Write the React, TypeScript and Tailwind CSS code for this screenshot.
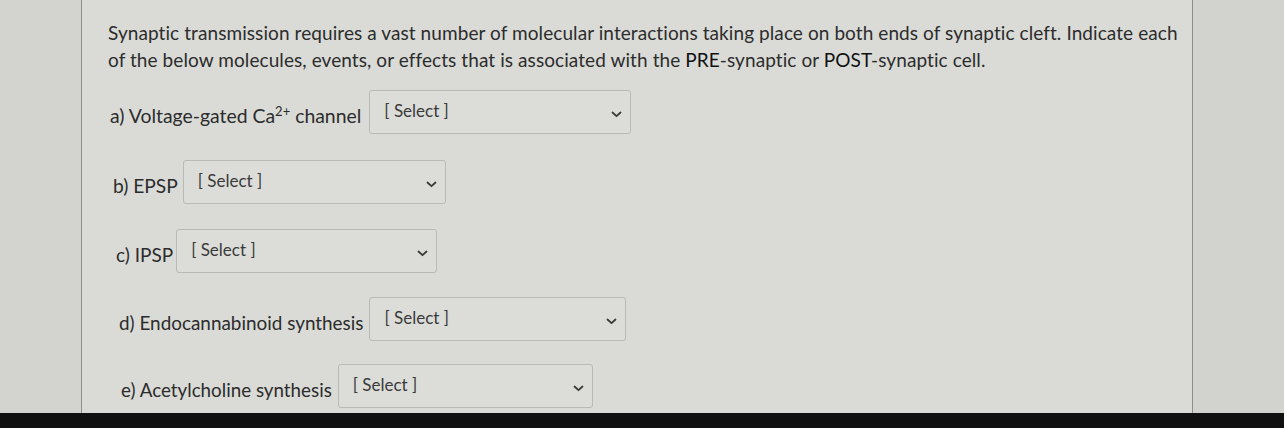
import React from 'react';

const items = [
  { key: 'a', label: <>a) Voltage-gated Ca<sup className="text-[13px]">2+</sup> channel</>, pl: 'pl-[2px]', mt: 'mt-[17px]', w: 'w-[262px]', gap: 'gap-[8px]', fs: 'text-[19.4px]' },
  { key: 'b', label: <>b) EPSP</>, pl: 'pl-[5px]', mt: 'mt-[26px]', w: 'w-[263px]', gap: 'gap-[5px]', fs: 'text-[19.2px]' },
  { key: 'c', label: <>c) IPSP</>, pl: 'pl-[8px]', mt: 'mt-[25px]', w: 'w-[261px]', gap: 'gap-[3px]', fs: 'text-[19px]' },
  { key: 'd', label: <>d) Endocannabinoid synthesis</>, pl: 'pl-[11px]', mt: 'mt-[24px]', w: 'w-[257px]', gap: 'gap-[6px]', fs: 'text-[18.9px]' },
  { key: 'e', label: <>e) Acetylcholine synthesis</>, pl: 'pl-[13px]', mt: 'mt-[23px]', w: 'w-[255px]', gap: 'gap-[6px]', fs: 'text-[18.8px]' },
];

const Chevron = () => (
  <svg width="11" height="7" viewBox="0 0 11 7" fill="none">
    <path d="M1.5 1.5 L5.5 5.2 L9.5 1.5" stroke="#3a3a3a" strokeWidth="1.8" strokeLinecap="round" strokeLinejoin="round" />
  </svg>
);

const SelectBox = ({ w }: { w: string }) => (
  <div className={`${w} h-[44px] border border-[#b9bab6] rounded-[3px] bg-[#dcddd9] flex items-center justify-between pl-[14px] pr-[8px]`}>
    <span className="text-[17px] text-[#3a3a3a] -mt-[3px]">[ Select ]</span>
    <span className="mt-[5px]"><Chevron /></span>
  </div>
);

export default function App() {
  return (
    <div className="w-[1284px] h-[428px] bg-[#101010] flex flex-col overflow-hidden" style={{ fontFamily: 'Lato, "Open Sans", sans-serif' }}>
      <div className="h-[413px] flex bg-[#d6d7d3]">
        <div className="w-[82px] border-r border-[#8e8f8b] bg-[#d3d4d0]" />
        <div className="flex-1 pl-[26px] pt-[19px] text-[#2c2c2c] bg-[#dadbd7]">
          <p className="whitespace-nowrap text-[19px] leading-[27px] tracking-[0.08px]">
            Synaptic transmission requires a vast number of molecular interactions taking place on both ends of synaptic cleft. Indicate each
            <br />
            of the below molecules, events, or effects that is associated with the <span className="text-[#111]">PRE</span>-synaptic or <span className="text-[#111]">POST</span>-synaptic cell.
          </p>
          <div className="flex flex-col">
            {items.map((it) => (
              <div key={it.key} className={`flex items-center ${it.gap} ${it.pl} ${it.mt}`}>
                <span className={`${it.fs} leading-[27px] pt-[6px]`}>{it.label}</span>
                <SelectBox w={it.w} />
              </div>
            ))}
          </div>
        </div>
        <div className="w-[92px] border-l border-[#8e8f8b] bg-[#d2d3cf]" />
      </div>
    </div>
  );
}
